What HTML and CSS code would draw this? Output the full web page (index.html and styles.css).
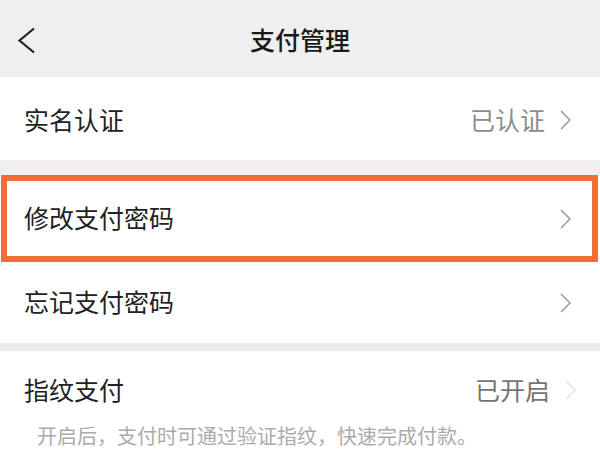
FILE: index.html
```html
<!DOCTYPE html>
<html lang="zh-CN">
<head>
<meta charset="utf-8">
<title>支付管理</title>
<link rel="stylesheet" href="styles.css">
</head>
<body>
<div class="page">
  <header class="nav">
    <div class="nav-back">
      <svg width="19" height="27" viewBox="0 0 19 27"><polyline points="17,1.5 2.5,13.5 17,25.5" fill="none" stroke="#222" stroke-width="2.2" stroke-linejoin="miter"/></svg>
    </div>
    <div class="nav-title">支付管理</div>
    <div></div>
  </header>

  <div class="row row-first">
    <span class="label">实名认证</span>
    <span class="right"><span class="value">已认证</span><svg class="chev" width="11" height="20" viewBox="0 0 11 20"><polyline points="1,1 10,10 1,19" fill="none" stroke="#9a9a9a" stroke-width="1.5"/></svg></span>
  </div>

  <div class="gap"></div>

  <div class="row row-hl">
    <span class="label">修改支付密码</span>
    <span class="right"><svg class="chev" width="11" height="20" viewBox="0 0 11 20"><polyline points="1,1 10,10 1,19" fill="none" stroke="#9a9a9a" stroke-width="1.5"/></svg></span>
  </div>

  <div class="row row-third">
    <span class="label">忘记支付密码</span>
    <span class="right"><svg class="chev" width="11" height="20" viewBox="0 0 11 20"><polyline points="1,1 10,10 1,19" fill="none" stroke="#9a9a9a" stroke-width="1.5"/></svg></span>
  </div>

  <div class="gap gap-small"></div>

  <div class="block">
    <div class="block-line">
      <span class="label">指纹支付</span>
      <span class="right"><span class="value value-dark">已开启</span><svg class="chev" width="11" height="20" viewBox="0 0 11 20"><polyline points="1,1 10,10 1,19" fill="none" stroke="#e2e2e2" stroke-width="1.5"/></svg></span>
    </div>
    <div class="hint">开启后，支付时可通过验证指纹，快速完成付款。</div>
  </div>
</div>
</body>
</html>
```

FILE: styles.css
```css
html, body {
  margin: 0;
  padding: 0;
  background: #ffffff;
}

body {
  font-family: "Noto Sans CJK SC", "Noto Sans", sans-serif;
  color: #222222;
}

.page {
  width: 600px;
  height: 450px;
  overflow: hidden;
}

.nav {
  height: 77px;
  background: #efefef;
  display: grid;
  grid-template-columns: 1fr auto 1fr;
  align-items: center;
}

.nav-back {
  padding-left: 17px;
  padding-top: 3px;
  display: flex;
  align-items: center;
}

.nav-title {
  font-size: 25px;
  font-weight: 500;
  color: #1a1a1a;
  padding-top: 1px;
}

.row {
  display: flex;
  align-items: center;
  justify-content: space-between;
  background: #ffffff;
  box-sizing: border-box;
}

.label {
  font-size: 25px;
  line-height: 36px;
  padding-bottom: 3px;
  color: #222222;
}

.right {
  display: flex;
  align-items: center;
  gap: 15px;
}

.value {
  font-size: 25px;
  line-height: 36px;
  padding-bottom: 3px;
  color: #8c8c8c;
}

.value-dark {
  color: #747474;
}

.chev {
  display: block;
}

.row-first {
  height: 83px;
  padding: 3px 29px 0 24px;
}

.gap {
  height: 15px;
  background: #efefef;
}

.row-hl {
  height: 87px;
  margin: 0 2px 0 1px;
  border: 6px solid #f36b3c;
  padding: 0 21px 0 17px;
}

.row-third {
  height: 81px;
  padding: 0 29px 0 24px;
}

.gap-small {
  height: 7px;
  background: #ebebeb;
  border-bottom: 1px solid #fbe4dc;
}

.block {
  padding: 19px 24px 0 24px;
}

.block-line {
  display: flex;
  align-items: center;
  justify-content: space-between;
  height: 40px;
}

.hint {
  margin-top: 12px;
  padding-left: 13px;
  font-size: 20px;
  line-height: 28px;
  color: #ababab;
}
```
